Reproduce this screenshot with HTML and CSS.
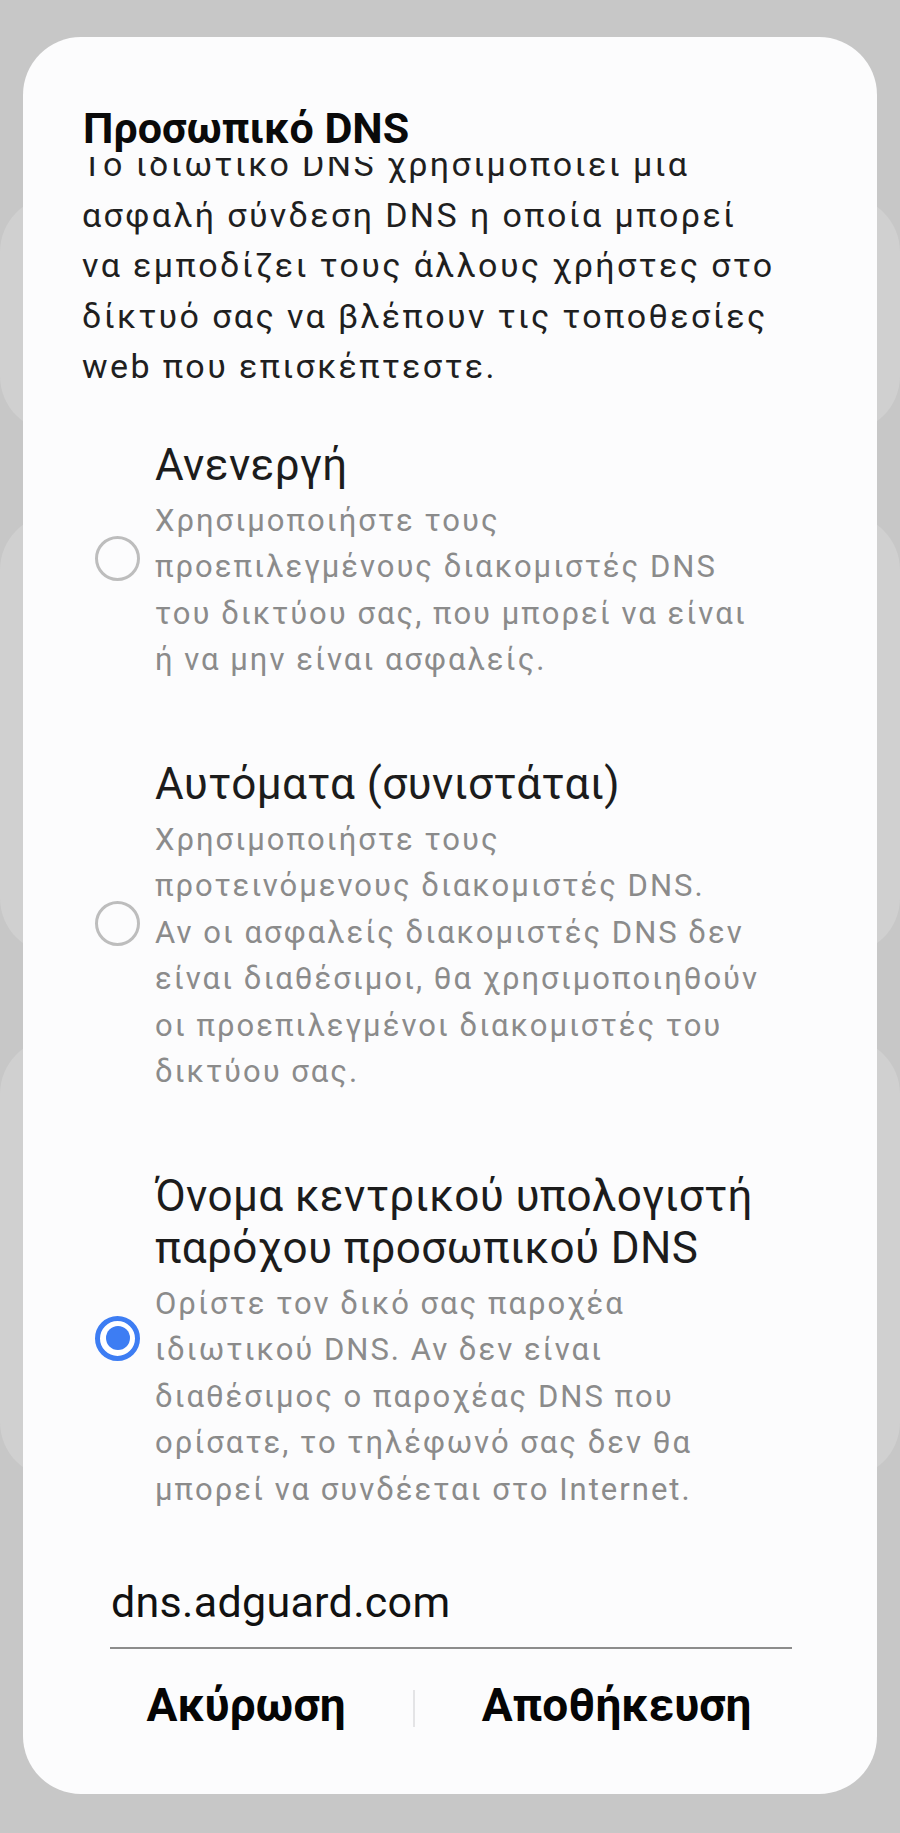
FILE: index.html
```html
<!DOCTYPE html>
<html lang="el">
<head>
<meta charset="utf-8">
<title>Προσωπικό DNS</title>
<link rel="stylesheet" href="styles.css">
</head>
<body>
<div class="screen">
  <div class="backdrop">
    <div class="bg-card bg-card-a"></div>
    <div class="bg-card bg-card-b"></div>
    <div class="bg-card bg-card-c"></div>
  </div>

  <div class="dialog">
    <h1 class="dialog-title">Προσωπικό DNS</h1>
    <div class="scroll">
      <p class="intro">Το ιδιωτικό DNS χρησιμοποιεί μια<br>ασφαλή σύνδεση DNS η οποία μπορεί<br>να εμποδίζει τους άλλους χρήστες στο<br>δίκτυό σας να βλέπουν τις τοποθεσίες<br>web που επισκέπτεστε.</p>

      <div class="options">
        <div class="option option-first">
          <span class="radio"></span>
          <div class="option-text">
            <div class="option-title">Ανενεργή</div>
            <div class="option-desc">Χρησιμοποιήστε τους<br>προεπιλεγμένους διακομιστές DNS<br>του δικτύου σας, που μπορεί να είναι<br>ή να μην είναι ασφαλείς.</div>
          </div>
        </div>

        <div class="option">
          <span class="radio"></span>
          <div class="option-text">
            <div class="option-title">Αυτόματα (συνιστάται)</div>
            <div class="option-desc">Χρησιμοποιήστε τους<br>προτεινόμενους διακομιστές DNS.<br>Αν οι ασφαλείς διακομιστές DNS δεν<br>είναι διαθέσιμοι, θα χρησιμοποιηθούν<br>οι προεπιλεγμένοι διακομιστές του<br>δικτύου σας.</div>
          </div>
        </div>

        <div class="option">
          <span class="radio radio-on"><span class="radio-dot"></span></span>
          <div class="option-text">
            <div class="option-title">Όνομα κεντρικού υπολογιστή<br>παρόχου προσωπικού DNS</div>
            <div class="option-desc">Ορίστε τον δικό σας παροχέα<br>ιδιωτικού DNS. Αν δεν είναι<br>διαθέσιμος ο παροχέας DNS που<br>ορίσατε, το τηλέφωνό σας δεν θα<br>μπορεί να συνδέεται στο Internet.</div>
          </div>
        </div>
      </div>

      <div class="field">dns.adguard.com</div>
    </div>

    <div class="actions">
      <span class="action">Ακύρωση</span>
      <span class="divider"></span>
      <span class="action">Αποθήκευση</span>
    </div>
  </div>
</div>
</body>
</html>
```
FILE: styles.css
```css
* { box-sizing: border-box; }

html, body {
  margin: 0;
  padding: 0;
}

body {
  background: #c7c7c7;
  font-family: Roboto, "Noto Sans", sans-serif;
  width: 900px;
  height: 1833px;
  overflow: hidden;
}

.screen {
  position: relative;
  width: 900px;
  height: 1833px;
}

/* dimmed page behind the dialog */
.backdrop {
  display: flex;
  flex-direction: column;
  padding-top: 196px;
}

.bg-card {
  background: #d0d0d0;
  border-radius: 56px;
}

.bg-card-a { height: 236px; }
.bg-card-b { height: 440px; margin-top: 82px; }
.bg-card-c { height: 440px; margin-top: 84px; }

/* dialog */
.dialog {
  position: absolute;
  top: 37px;
  left: 23px;
  width: 854px;
  height: 1757px;
  background: #fcfcfd;
  border-radius: 58px;
  padding-top: 62px;
  display: flex;
  flex-direction: column;
}

.dialog-title {
  margin: 0 0 0 60px;
  font-size: 43px;
  font-weight: 700;
  line-height: 58px;
  color: #0a0a0a;
}

/* scrolled content area: first line is partly hidden under the title */
.scroll {
  overflow: hidden;
  flex: 0 0 auto;
}

.intro {
  margin: -18px 0 0 59px;
  font-size: 34px;
  line-height: 50.5px;
  letter-spacing: 2.4px;
  color: #1f1f1f;
  white-space: nowrap;
}

.options {
  display: flex;
  flex-direction: column;
  gap: 74px;
  margin-top: 47px;
}

.option {
  display: flex;
  align-items: center;
  gap: 15px;
  padding-left: 72px;
}

.radio {
  flex: 0 0 45px;
  width: 45px;
  height: 45px;
  border-radius: 50%;
  border: 3px solid #bdbdbd;
  display: flex;
  align-items: center;
  justify-content: center;
  margin-top: -6px;
}

.radio-on {
  border: 5px solid #3d7df3;
  background: #ffffff;
}

.radio-dot {
  width: 24px;
  height: 24px;
  border-radius: 50%;
  background: #3d7df3;
}

.option-text {
  display: flex;
  flex-direction: column;
  gap: 7px;
  white-space: nowrap;
}

.option-title {
  font-size: 44px;
  line-height: 52px;
  letter-spacing: 0.4px;
  color: #1c1c1c;
}

.option-desc {
  font-size: 31px;
  line-height: 46.5px;
  letter-spacing: 2px;
  color: #8b8b8b;
}

.field {
  margin: 63px 85px 0 87px;
  padding: 0 0 19px 1px;
  font-size: 43px;
  line-height: 52px;
  letter-spacing: 0.3px;
  color: #111111;
  border-bottom: 2px solid #8c8c8c;
}

.actions {
  margin-top: 30px;
  display: flex;
  justify-content: center;
  align-items: center;
  padding-right: 2px;
}

.action {
  padding: 0 67px;
  font-size: 46px;
  font-weight: 700;
  line-height: 52px;
  color: #050505;
}

.divider {
  width: 2px;
  height: 37px;
  background: #e4e4e6;
  margin-top: 6px;
}
```
